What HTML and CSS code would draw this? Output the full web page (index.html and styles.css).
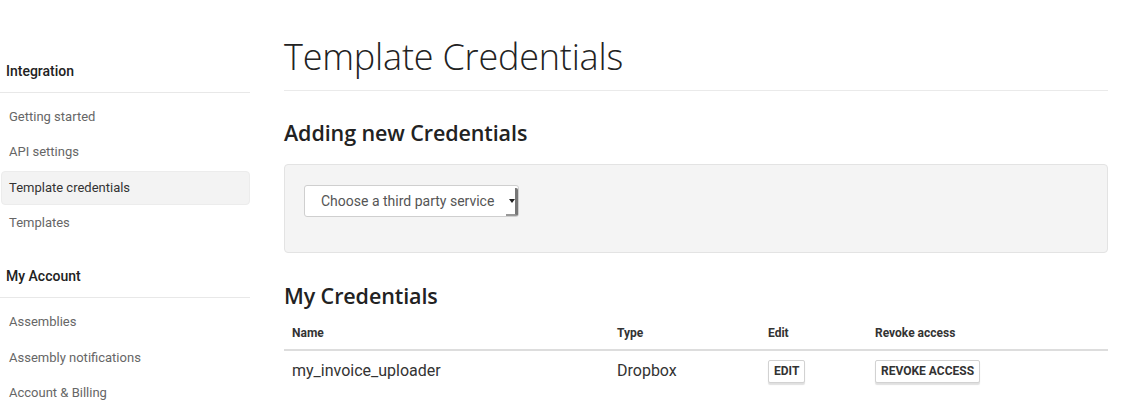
FILE: index.html
```html
<!DOCTYPE html>
<html>
<head>
<meta charset="utf-8">
<link rel="stylesheet" href="styles.css">
</head>
<body>
<div class="page">
  <aside class="sidebar">
    <h4 class="nav-title">Integration</h4>
    <ul class="nav">
      <li><a>Getting started</a></li>
      <li><a>API settings</a></li>
      <li class="active"><a>Template credentials</a></li>
      <li><a>Templates</a></li>
    </ul>
    <h4 class="nav-title second">My Account</h4>
    <ul class="nav">
      <li><a>Assemblies</a></li>
      <li><a>Assembly notifications</a></li>
      <li><a>Account &amp; Billing</a></li>
    </ul>
  </aside>
  <main class="main">
    <h1 class="title">Template Credentials</h1>
    <h2 class="section">Adding new Credentials</h2>
    <div class="well">
      <div class="select">
        <span class="select-text">Choose a third party service</span>
        <span class="select-arrow"></span>
      </div>
    </div>
    <h2 class="section mine">My Credentials</h2>
    <table class="creds">
      <thead>
        <tr>
          <th class="c-name">Name</th>
          <th class="c-type">Type</th>
          <th class="c-edit">Edit</th>
          <th class="c-rev">Revoke access</th>
        </tr>
      </thead>
      <tbody>
        <tr>
          <td>my_invoice_uploader</td>
          <td>Dropbox</td>
          <td><span class="btn">EDIT</span></td>
          <td><span class="btn">REVOKE ACCESS</span></td>
        </tr>
      </tbody>
    </table>
  </main>
</div>
</body>
</html>
```

FILE: styles.css
```css
html, body {
  margin: 0;
  padding: 0;
  background: #fff;
}
body {
  font-family: Roboto, "Liberation Sans", sans-serif;
  color: #333;
}
.page {
  display: flex;
  align-items: flex-start;
  padding-top: 38px;
}
.sidebar {
  width: 250px;
  flex: none;
  padding-top: 25px;
}
.nav-title {
  margin: 0;
  padding: 0 6px 12px;
  font-size: 14px;
  font-weight: 500;
  line-height: 17px;
  color: #222;
  border-bottom: 1px solid #e8e8e8;
}
.nav-title.second {
  margin-top: 28px;
}
.nav {
  list-style: none;
  margin: 0;
  padding: 7px 0 0;
}
.nav li {
  margin: 0 0 1.4px 1px;
}
.nav li a {
  display: block;
  padding: 9px 8px;
  font-size: 13px;
  line-height: 16px;
  color: #666;
  border-radius: 4px;
}
.nav li.active a {
  background: #f3f3f3;
  color: #333;
  border: 1px solid #ececec;
  padding: 8px 7px;
}
.main {
  margin-left: 34px;
  width: 824px;
  flex: none;
}
.title {
  margin: 0;
  font-family: "Open Sans", sans-serif;
  font-weight: 300;
  font-size: 36px;
  line-height: 38px;
  color: #222;
  letter-spacing: -0.2px;
  padding-bottom: 14px;
  border-bottom: 1px solid #eaeaea;
}
.section {
  margin: 27px 0 16px;
  font-family: "Open Sans", sans-serif;
  font-weight: 600;
  font-size: 21.5px;
  line-height: 30px;
  color: #222;
  letter-spacing: -0.1px;
}
.section.mine {
  margin: 28px 0 7px;
}
.well {
  height: 89px;
  background: #f4f4f4;
  border: 1px solid #e3e3e3;
  border-radius: 4px;
  padding: 20px 19px;
  box-sizing: border-box;
}
.select {
  display: flex;
  align-items: center;
  width: 215px;
  height: 32px;
  box-sizing: border-box;
  background: #fff;
  border: 1px solid #cfcfcf;
  border-radius: 3px;
  position: relative;
}
.select-text {
  flex: 1;
  padding-left: 16px;
  font-size: 14px;
  color: #555;
}
.select-arrow {
  width: 12px;
  height: 28px;
  margin-top: 2px;
  box-sizing: border-box;
  border-right: 3px solid #777;
  border-bottom: 2px solid #999;
  border-radius: 0 2px 2px 0;
  position: relative;
}
.select-arrow::after {
  content: "";
  position: absolute;
  left: 3px;
  top: 11px;
  border-left: 3px solid transparent;
  border-right: 3px solid transparent;
  border-top: 4px solid #222;
}
.creds {
  width: 824px;
  border-collapse: collapse;
}
.creds th {
  text-align: left;
  font-size: 12px;
  font-weight: 700;
  color: #333;
  padding: 8px 8px 8px;
  border-bottom: 2px solid #ddd;
  line-height: 15px;
}
.c-name { width: 309px; }
.c-type { width: 135px; }
.c-edit { width: 91px; }
.creds td {
  font-size: 16px;
  color: #333;
  padding: 8px 8px;
  line-height: 22px;
  vertical-align: middle;
}
.btn {
  display: inline-block;
  font-size: 12px;
  font-weight: 700;
  line-height: 19px;
  padding: 1px 5px 1px;
  color: #333;
  background: #fff;
  border: 1px solid #d2d2d2;
  border-radius: 2px;
  box-shadow: 0 2px 1px rgba(0,0,0,0.12);
}
```
